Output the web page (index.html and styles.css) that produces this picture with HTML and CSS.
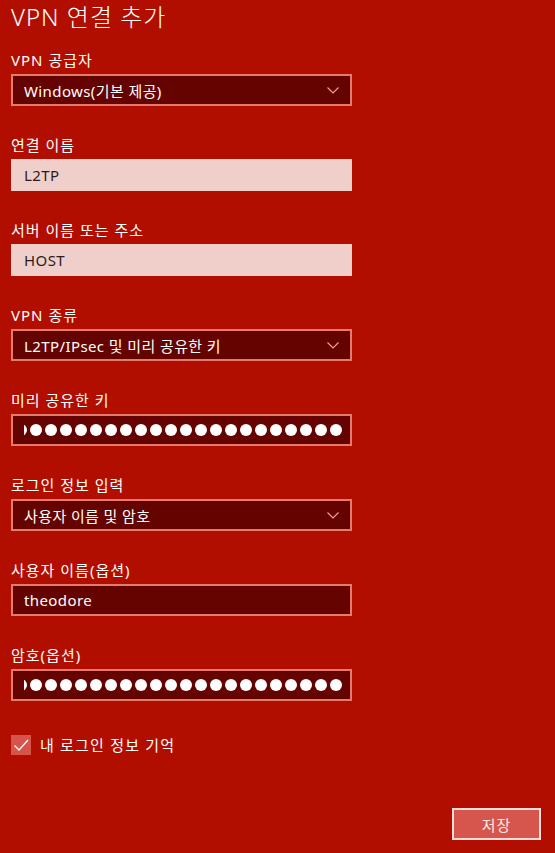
FILE: index.html
```html
<!DOCTYPE html>
<html lang="ko">
<head>
<meta charset="utf-8">
<link rel="stylesheet" href="styles.css">
</head>
<body>
<div class="page">
  <h1 class="title">VPN 연결 추가</h1>

  <div class="field">
    <div class="label">VPN 공급자</div>
    <div class="box select"><span class="val">Windows(기본 제공)</span><svg class="chev" width="12" height="7" viewBox="0 0 12 7"><path d="M0.5 0.5 L6 6 L11.5 0.5" fill="none" stroke="#f0a49a" stroke-width="1.1"/></svg></div>
  </div>

  <div class="field">
    <div class="label">연결 이름</div>
    <div class="box light"><span class="val">L2TP</span></div>
  </div>

  <div class="field">
    <div class="label">서버 이름 또는 주소</div>
    <div class="box light"><span class="val">HOST</span></div>
  </div>

  <div class="field">
    <div class="label">VPN 종류</div>
    <div class="box select"><span class="val">L2TP/IPsec 및 미리 공유한 키</span><svg class="chev" width="12" height="7" viewBox="0 0 12 7"><path d="M0.5 0.5 L6 6 L11.5 0.5" fill="none" stroke="#f0a49a" stroke-width="1.1"/></svg></div>
  </div>

  <div class="field">
    <div class="label">미리 공유한 키</div>
    <div class="box dark pw"><div class="dots"><i></i><i></i><i></i><i></i><i></i><i></i><i></i><i></i><i></i><i></i><i></i><i></i><i></i><i></i><i></i><i></i><i></i><i></i><i></i><i></i><i></i><i></i><i></i><i></i></div></div>
  </div>

  <div class="field">
    <div class="label">로그인 정보 입력</div>
    <div class="box select"><span class="val">사용자 이름 및 암호</span><svg class="chev" width="12" height="7" viewBox="0 0 12 7"><path d="M0.5 0.5 L6 6 L11.5 0.5" fill="none" stroke="#f0a49a" stroke-width="1.1"/></svg></div>
  </div>

  <div class="field">
    <div class="label">사용자 이름(옵션)</div>
    <div class="box dark"><span class="val">theodore</span></div>
  </div>

  <div class="field">
    <div class="label">암호(옵션)</div>
    <div class="box dark pw"><div class="dots"><i></i><i></i><i></i><i></i><i></i><i></i><i></i><i></i><i></i><i></i><i></i><i></i><i></i><i></i><i></i><i></i><i></i><i></i><i></i><i></i><i></i><i></i><i></i><i></i></div></div>
  </div>

  <div class="check-row">
    <span class="checkbox"><svg width="20" height="20" viewBox="0 0 20 20"><path d="M3.5 10.5 L8 15 L17 5" fill="none" stroke="#ffffff" stroke-width="1.3"/></svg></span>
    <span class="check-label">내 로그인 정보 기억</span>
  </div>

  <div class="actions">
    <button class="save">저장</button>
  </div>
</div>
</body>
</html>
```

FILE: styles.css
```css
html, body {
  margin: 0;
  padding: 0;
}
body {
  background: #b10e00;
  width: 555px;
  height: 853px;
  overflow: hidden;
  font-family: "Noto Sans", "Noto Sans CJK KR", sans-serif;
  color: #ffffff;
}
.page {
  padding: 0 0 0 11px;
  display: flex;
  flex-direction: column;
  height: 853px;
  box-sizing: border-box;
}
.title {
  margin: 0;
  font-size: 24px;
  font-weight: 300;
  line-height: 32px;
  height: 50px;
  padding-top: 1px;
  box-sizing: border-box;
  letter-spacing: 1px;
}
.field {
  display: flex;
  flex-direction: column;
  height: 85px;
}
.label {
  font-size: 15px;
  line-height: 20px;
  height: 20px;
  margin-bottom: 4px;
  letter-spacing: 1px;
}
.box {
  width: 341px;
  height: 32px;
  box-sizing: border-box;
  display: flex;
  align-items: center;
  padding: 0 11px 0 11px;
  font-size: 15px;
}
.select, .dark {
  background: #650300;
  border: 2px solid #e47b6f;
}
.light {
  background: #f0cfcb;
  color: #2a1c1c;
  padding-left: 13px;
}
.val {
  flex: 1;
  white-space: nowrap;
  letter-spacing: 0.4px;
}
.chev {
  flex: none;
}
.pw {
  padding: 0 8px 0 11px;
}
.dots {
  flex: 1;
  display: flex;
  justify-content: flex-end;
  gap: 3px;
  overflow: hidden;
}
.dots i {
  flex: none;
  width: 12px;
  height: 12px;
  border-radius: 50%;
  background: #ffffff;
}
.check-row {
  display: flex;
  align-items: center;
  gap: 9px;
  margin-top: 5px;
  height: 20px;
}
.checkbox {
  width: 20px;
  height: 20px;
  background: #d6544a;
  display: flex;
}
.check-label {
  font-size: 15px;
  line-height: 20px;
  letter-spacing: 1.2px;
}
.actions {
  margin-top: auto;
  display: flex;
  justify-content: flex-end;
  padding: 0 14px 13px 0;
}
.save {
  width: 89px;
  height: 32px;
  background: #d6554d;
  border: 2px solid #f4e0d8;
  color: #fbe9e4;
  font-family: "Noto Sans", "Noto Sans CJK KR", sans-serif;
  font-size: 15px;
  letter-spacing: 1px;
  padding: 0;
  margin: 0;
}
```
